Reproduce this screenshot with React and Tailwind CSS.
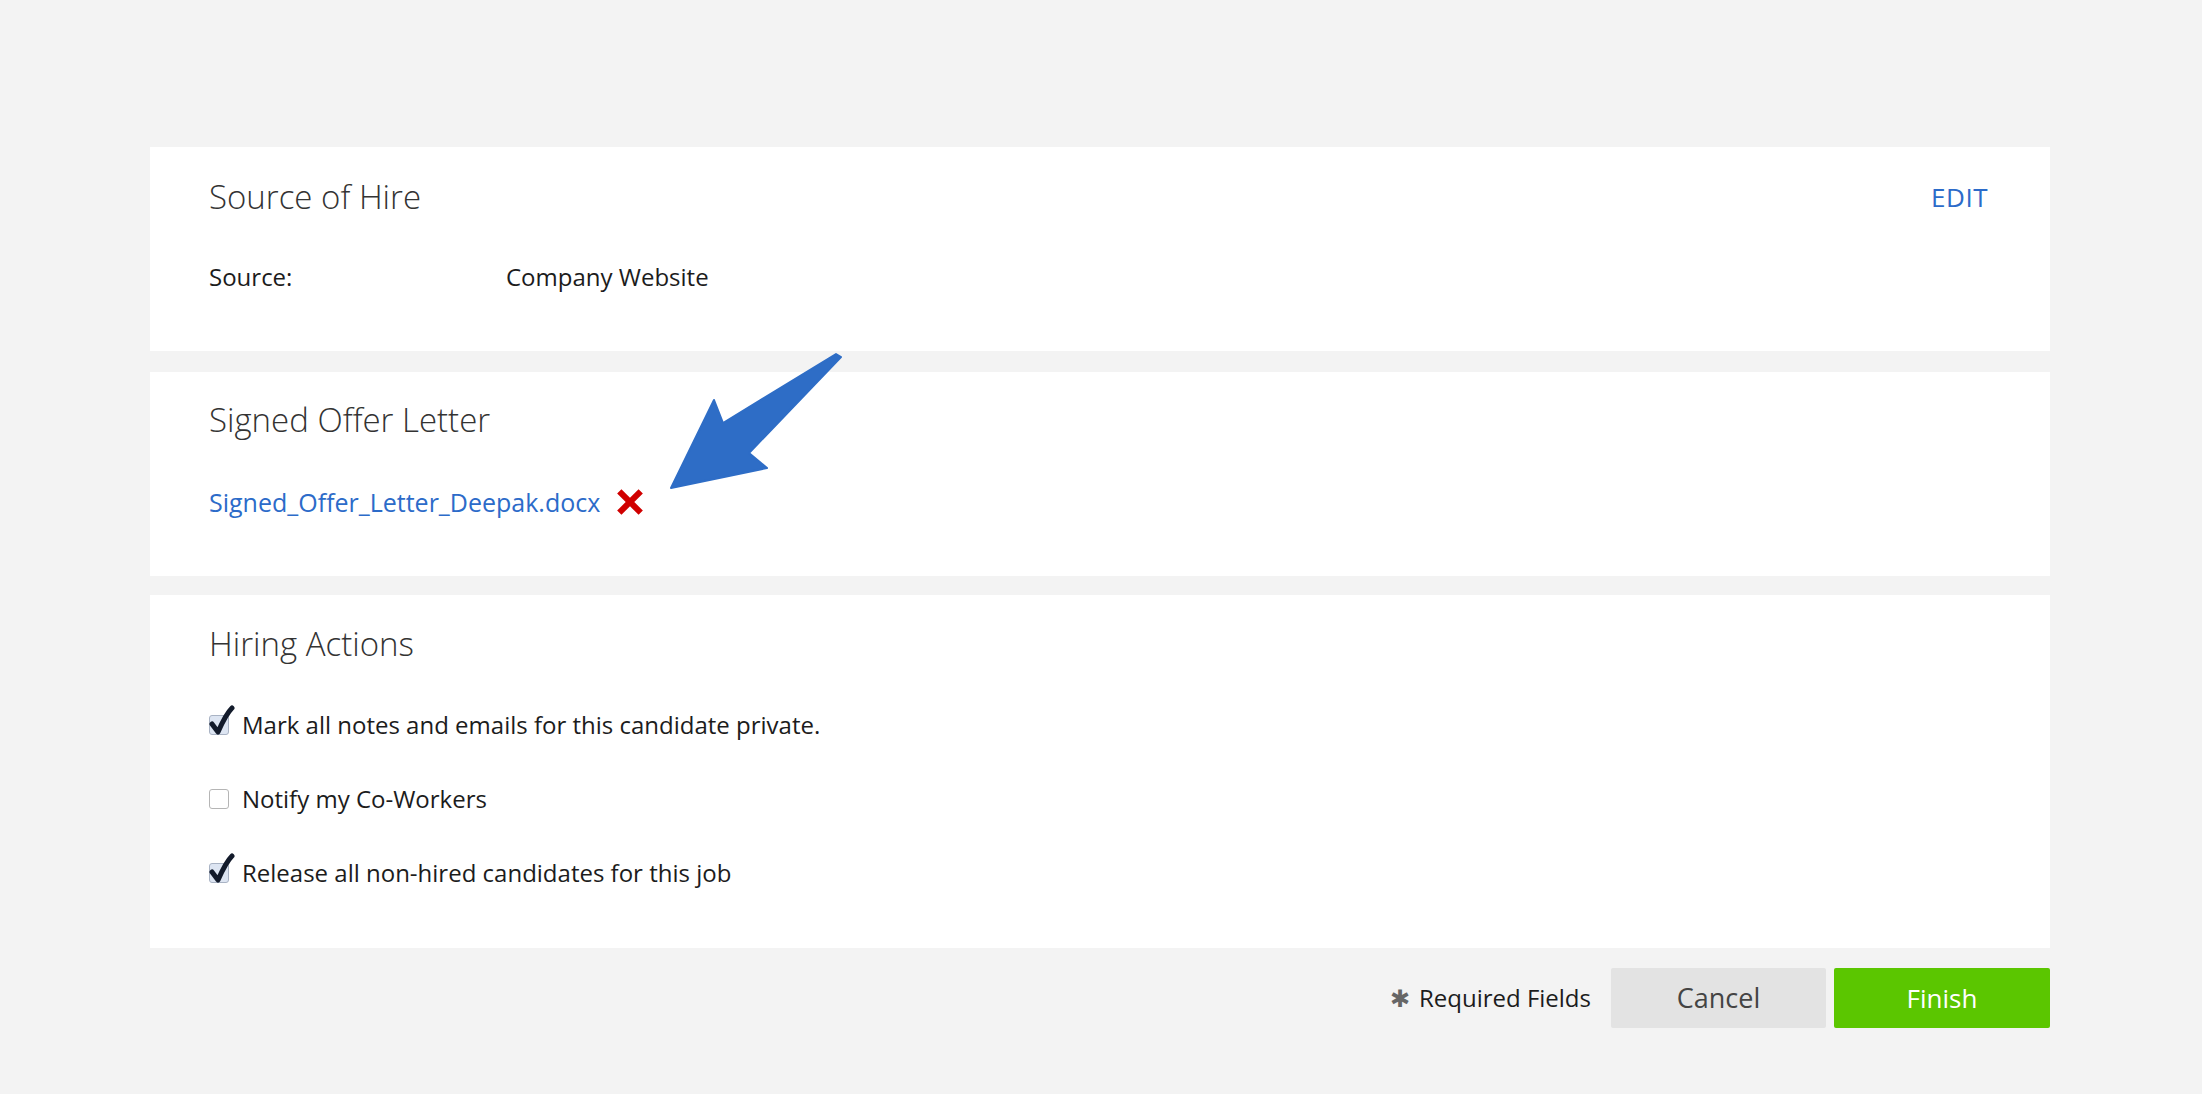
import React from "react";

const font = { fontFamily: '"Open Sans", "Liberation Sans", sans-serif' };

const Checkbox = ({ checked }) => (
  <span className="relative inline-block w-[20px] h-[20px] shrink-0">
    <span
      className={
        "absolute inset-0 rounded-[3px] border " +
        (checked ? "bg-[#dde5f2] border-[#a9b3c4]" : "bg-white border-[#b5b5b5]")
      }
    />
    {checked && (
      <svg className="absolute left-0 top-[-10px]" width="26" height="30" viewBox="0 0 26 30">
        <path
          d="M3 19 L9 27 C13 18 17 9 23 3"
          fill="none"
          stroke="#131b2b"
          strokeWidth="5"
          strokeLinecap="round"
          strokeLinejoin="round"
        />
      </svg>
    )}
  </span>
);

const Card = ({ className, children }) => (
  <div className={"w-[1900px] bg-white pl-[59px] pr-[62px] " + className}>{children}</div>
);

export default function App() {
  return (
    <div className="relative min-h-screen bg-[#f3f3f3] pt-[147px] pl-[150px]" style={font}>
      <Card className="h-[204px] pt-[30px]">
        <div className="flex items-center justify-between">
          <h2 className="text-[33px] leading-[40px] font-light text-[#333]">Source of Hire</h2>
          <button className="text-[26px] text-[#2c6bc9] tracking-[0.5px]">EDIT</button>
        </div>
        <div className="flex items-center mt-[45px] text-[24px] leading-[30px] text-[#1c1c1c]">
          <span className="w-[297px]">Source:</span>
          <span>Company Website</span>
        </div>
      </Card>

      <Card className="h-[204px] pt-[28px] mt-[21px]">
        <h2 className="text-[33px] leading-[40px] font-light text-[#333]">Signed Offer Letter</h2>
        <div className="flex items-center mt-[47px] gap-[15px]">
          <a className="text-[25px] leading-[30px] text-[#2c6bc9]">Signed_Offer_Letter_Deepak.docx</a>
          <svg width="30" height="30" viewBox="0 0 28 28">
            <path
              d="M2 6 L6 2 L14 10 L22 2 L26 6 L18 14 L26 22 L22 26 L14 18 L6 26 L2 22 L10 14 Z"
              fill="#d00000"
            />
          </svg>
        </div>
      </Card>

      <Card className="h-[353px] pt-[29px] mt-[19px]">
        <h2 className="text-[33px] leading-[40px] font-light text-[#333]">Hiring Actions</h2>
        <div className="flex flex-col gap-[44px] mt-[46px] text-[24px] leading-[30px] text-[#1c1c1c]">
          <label className="flex items-center gap-[13px]">
            <Checkbox checked />
            <span>Mark all notes and emails for this candidate private.</span>
          </label>
          <label className="flex items-center gap-[13px]">
            <Checkbox />
            <span>Notify my Co-Workers</span>
          </label>
          <label className="flex items-center gap-[13px]">
            <Checkbox checked />
            <span>Release all non-hired candidates for this job</span>
          </label>
        </div>
      </Card>

      <div className="w-[1900px] flex justify-end items-center mt-[20px]">
        <span className="flex items-center gap-[9px] text-[24px] text-[#1c1c1c] mr-[20px]">
          <span className="text-[#666] text-[24px]">✱</span>
          Required Fields
        </span>
        <button className="w-[215px] h-[60px] rounded-[2px] bg-[#e3e3e3] text-[27px] text-[#444]">Cancel</button>
        <button className="w-[216px] h-[60px] ml-[8px] rounded-[2px] bg-[#5bc600] text-[26px] text-white">Finish</button>
      </div>

      <svg className="absolute left-0 top-0 pointer-events-none" width="2202" height="1094">
        <polygon
          points="671,488 714,400 723,423 836,354 841,357 749,453 767,468"
          fill="#2e6dc6"
          stroke="#2e6dc6"
          strokeWidth="2"
          strokeLinejoin="round"
        />
      </svg>
    </div>
  );
}
